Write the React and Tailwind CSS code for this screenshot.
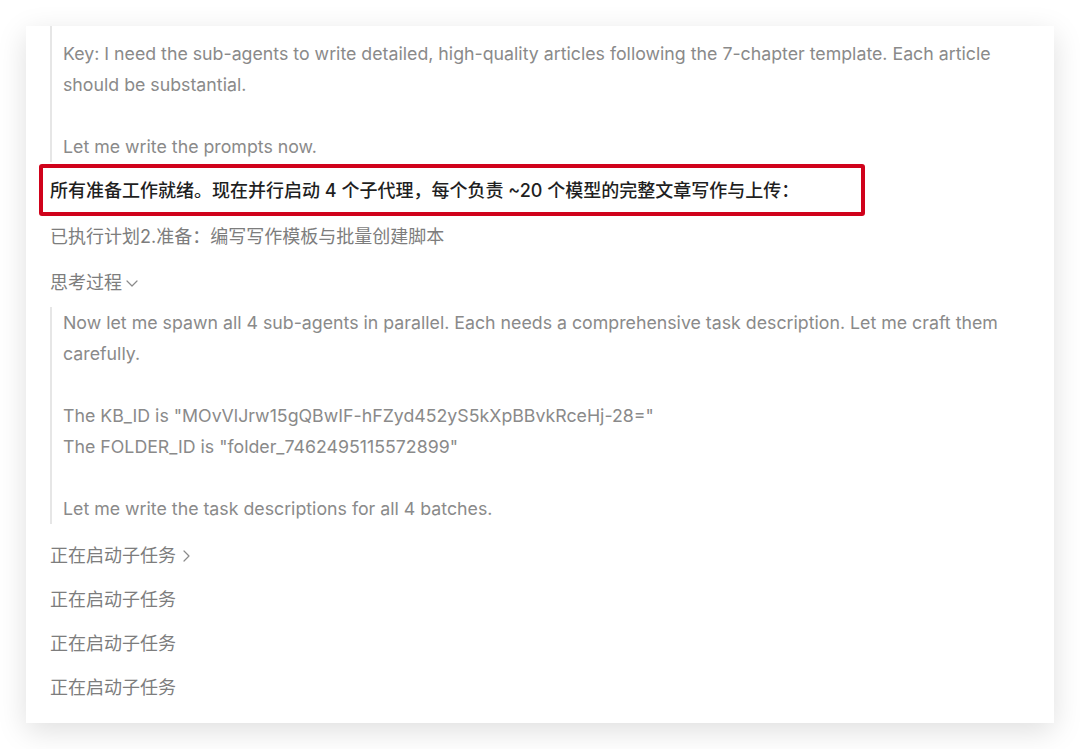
import React from 'react';

const Quote = ({ lines, className = '' }) => (
    <div className={`border-l-2 border-[#e6e6e6] pl-[11px] text-[#8a8a8a] text-[17.75px] ${className}`}>
        {lines.map((line, i) => (
            <p key={i} className="leading-[31px] h-[31px] whitespace-nowrap">{line || '\u00a0'}</p>
        ))}
    </div>
);

const Chevron = ({ dir }) => (
    <svg width="14" height="14" viewBox="0 0 14 14" fill="none" stroke="#8a8a8a" strokeWidth="1.2" strokeLinecap="round" strokeLinejoin="round" className="ml-[3px] mt-[1px]">
        {dir === 'down' ? <path d="M2 5l5 5 5-5" /> : <path d="M5 2l5 5-5 5" />}
    </svg>
);

export default function App() {
    return (
        <div className="min-h-[749px] w-[1080px] bg-white pt-[26px] px-[26px]" style={{ fontFamily: '"Inter", "Noto Sans CJK SC", sans-serif' }}>
            <div className="bg-white shadow-[0_8px_28px_rgba(0,0,0,0.13)] h-[697px] pl-[24px] text-[18px]">
                <Quote
                    className="pt-[12px]"
                    lines={[
                        'Key: I need the sub-agents to write detailed, high-quality articles following the 7-chapter template. Each article',
                        'should be substantial.',
                        '',
                        'Let me write the prompts now.',
                    ]}
                />

                <div className="mt-[2px] -ml-[11px] w-[826px] h-[52px] border-4 border-[#d0021b] rounded-[3px] pl-[7px] flex items-center text-[#1f1f1f] font-medium">
                    所有准备工作就绪。现在并行启动 4 个子代理，每个负责 ~20 个模型的完整文章写作与上传：
                </div>

                <p className="mt-[7px] leading-[28px] text-[#7d7d7d]">已执行计划2.准备：编写写作模板与批量创建脚本</p>

                <div className="mt-[17px] h-[28px] flex items-center text-[#7d7d7d]">
                    <span>思考过程</span>
                    <Chevron dir="down" />
                </div>

                <Quote
                    className="mt-[11px]"
                    lines={[
                        'Now let me spawn all 4 sub-agents in parallel. Each needs a comprehensive task description. Let me craft them',
                        'carefully.',
                        '',
                        'The KB_ID is "MOvVlJrw15gQBwIF-hFZyd452yS5kXpBBvkRceHj-28="',
                        'The FOLDER_ID is "folder_7462495115572899"',
                        '',
                        'Let me write the task descriptions for all 4 batches.',
                    ]}
                />

                <div className="mt-[17px] flex flex-col gap-[16px] text-[#7d7d7d]">
                    <div className="h-[28px] flex items-center">
                        <span>正在启动子任务</span>
                        <Chevron dir="right" />
                    </div>
                    <div className="h-[28px] flex items-center">正在启动子任务</div>
                    <div className="h-[28px] flex items-center">正在启动子任务</div>
                    <div className="h-[28px] flex items-center">正在启动子任务</div>
                </div>
            </div>
        </div>
    );
}
